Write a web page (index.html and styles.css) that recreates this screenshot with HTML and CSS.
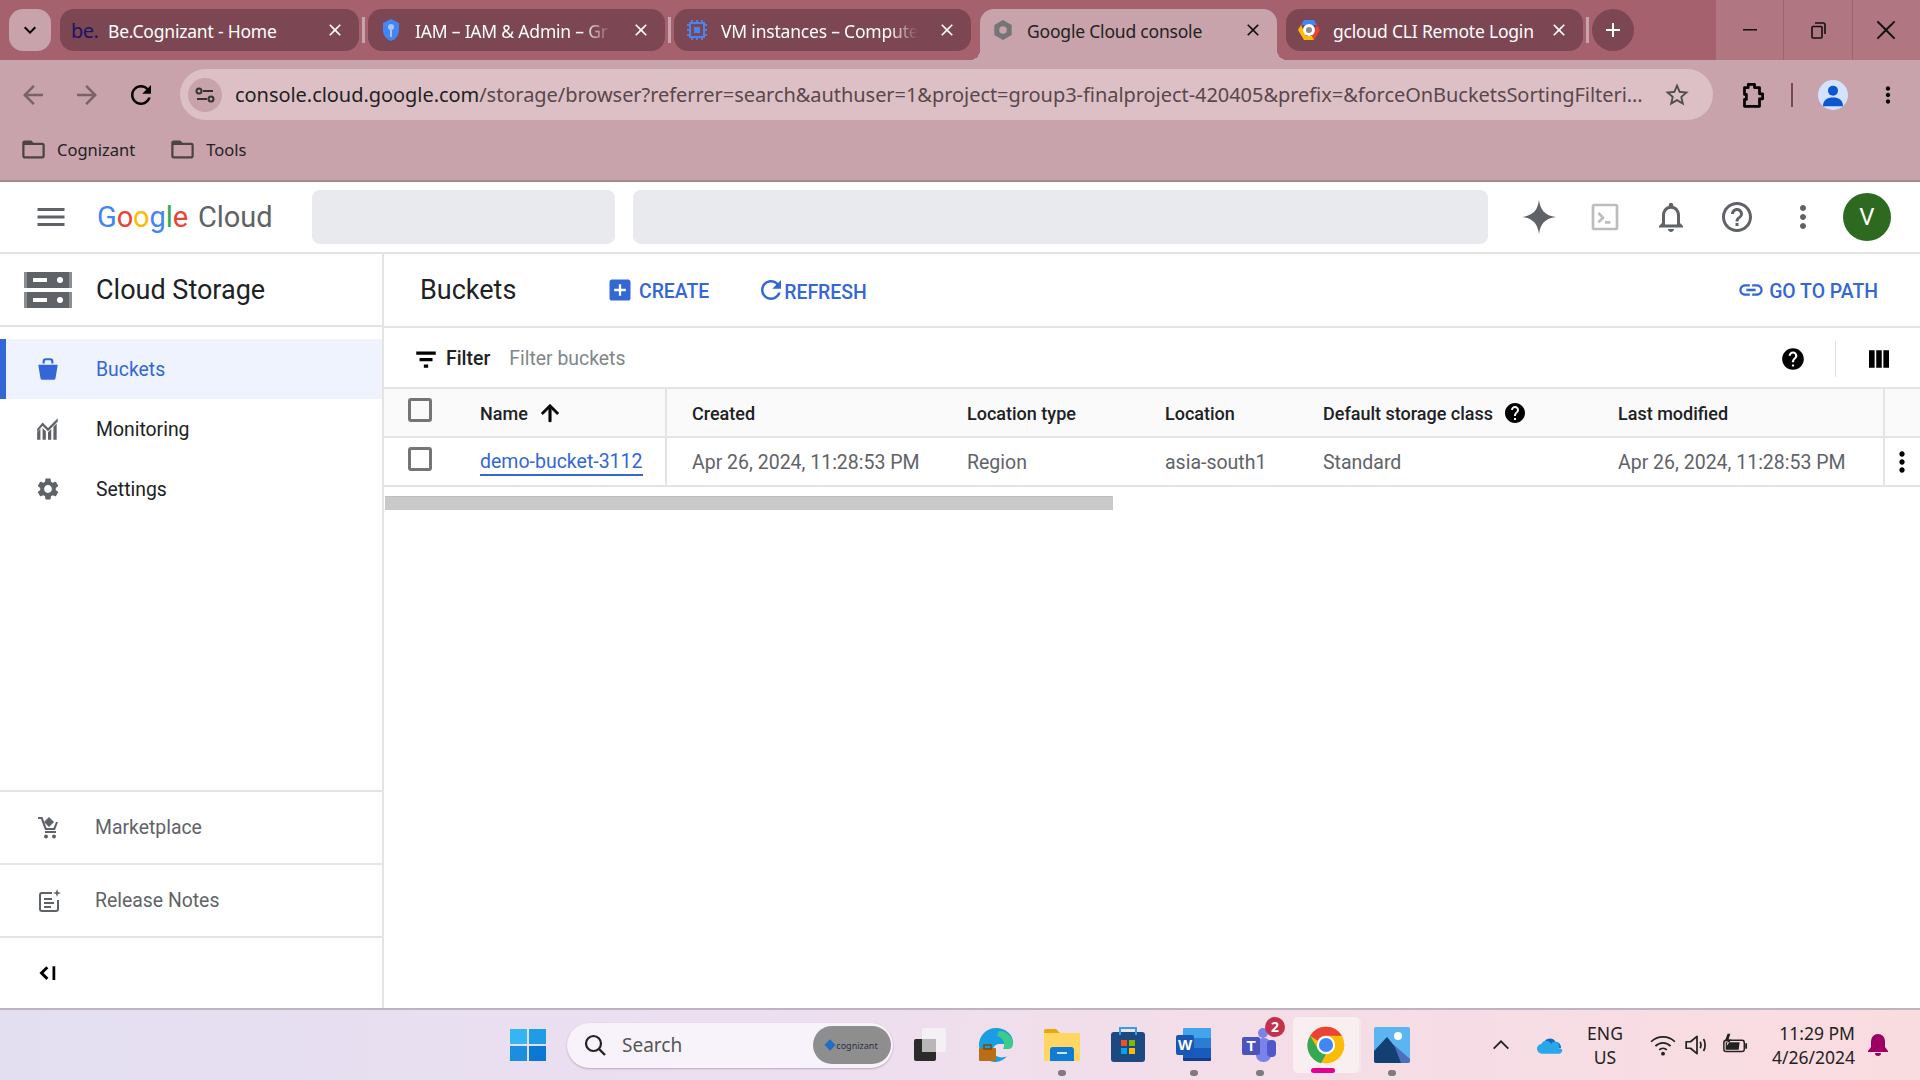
FILE: index.html
```html
<!DOCTYPE html>
<html lang="en">

<head>
    <meta charset="UTF-8">
    <title>Google Cloud console</title>
    <link rel="stylesheet" href="styles.css">
</head>

<body>
    <svg class="sprite" width="0" height="0">
        <symbol id="i-close" viewBox="0 0 24 24"><path d="M19 6.41L17.59 5 12 10.59 6.41 5 5 6.41 10.59 12 5 17.59 6.41 19 12 13.41 17.59 19 19 17.59 13.41 12z"/></symbol>
        <symbol id="i-back" viewBox="0 0 24 24"><path d="M20 11H7.83l5.59-5.59L12 4l-8 8 8 8 1.41-1.41L7.83 13H20v-2z"/></symbol>
        <symbol id="i-forward" viewBox="0 0 24 24"><path d="M12 4l-1.41 1.41L16.17 11H4v2h12.17l-5.58 5.59L12 20l8-8z"/></symbol>
        <symbol id="i-refresh" viewBox="0 0 24 24"><path d="M17.65 6.35C16.2 4.9 14.21 4 12 4c-4.42 0-7.99 3.58-7.99 8s3.57 8 7.99 8c3.73 0 6.84-2.55 7.73-6h-2.08c-.82 2.33-3.04 4-5.65 4-3.31 0-6-2.69-6-6s2.69-6 6-6c1.66 0 3.14.69 4.22 1.78L13 11h7V4l-2.35 2.35z"/></symbol>
        <symbol id="i-folder" viewBox="0 0 24 24"><path d="M20 6h-8l-2-2H4c-1.1 0-1.99.9-1.99 2L2 18c0 1.1.9 2 2 2h16c1.1 0 2-.9 2-2V8c0-1.1-.9-2-2-2zm0 12H4V8h16v10z"/></symbol>
        <symbol id="i-more" viewBox="0 0 24 24"><path d="M12 8c1.1 0 2-.9 2-2s-.9-2-2-2-2 .9-2 2 .9 2 2 2zm0 2c-1.1 0-2 .9-2 2s.9 2 2 2 2-.9 2-2-.9-2-2-2zm0 6c-1.1 0-2 .9-2 2s.9 2 2 2 2-.9 2-2-.9-2-2-2z"/></symbol>
        <symbol id="i-help" viewBox="0 0 24 24"><path d="M12 2C6.48 2 2 6.48 2 12s4.48 10 10 10 10-4.48 10-10S17.52 2 12 2zm1 17h-2v-2h2v2zm2.07-7.75l-.9.92C13.45 12.9 13 13.5 13 15h-2v-.5c0-1.1.45-2.1 1.17-2.83l1.24-1.26c.37-.36.59-.86.59-1.41 0-1.1-.9-2-2-2s-2 .9-2 2H8c0-2.21 1.79-4 4-4s4 1.79 4 4c0 .88-.36 1.68-.93 2.25z"/></symbol>
    </svg>

    <!-- browser tabs -->
    <div class="tabstrip">
        <div class="tab-list"><svg class="icon-sm" viewBox="0 0 24 24"><path d="M7.41 8.59L12 13.17l4.59-4.58L18 10l-6 6-6-6z"/></svg></div>
        <div class="tab">
            <span class="be-logo">be.</span>
            <span class="tab-title">Be.Cognizant - Home</span>
            <svg class="tab-x"><use href="#i-close"/></svg>
        </div>
        <i class="tab-sep"></i>
        <div class="tab">
            <svg class="favicon" viewBox="0 0 24 24"><path fill="#4285f4" d="M12 1l8 4v7c0 5.500-3.400 9.500-8 11-4.600-1.500-8-5.500-8-11V5z"/><circle cx="12" cy="9" r="3" fill="#a9c6f7"/><path fill="#a9c6f7" d="M11 12h2v7h-2z"/></svg>
            <span class="tab-title fade">IAM – IAM &amp; Admin – Gr</span>
            <svg class="tab-x"><use href="#i-close"/></svg>
        </div>
        <i class="tab-sep"></i>
        <div class="tab">
            <svg class="favicon" viewBox="0 0 24 24"><path fill="none" stroke="#5b8def" stroke-width="1.500" d="M2 7h3M2 12h3M2 17h3M19 7h3M19 12h3M19 17h3M7 2v3M12 2v3M17 2v3M7 19v3M12 19v3M17 19v3"/><rect x="5" y="5" width="14" height="14" fill="none" stroke="#4285f4" stroke-width="2"/><rect x="9" y="9" width="6" height="6" fill="#4285f4"/></svg>
            <span class="tab-title fade">VM instances – Compute</span>
            <svg class="tab-x"><use href="#i-close"/></svg>
        </div>
        <div class="tab tab-active">
            <svg class="favicon" viewBox="0 0 24 24"><path fill="#757575" d="M12 2l8.700 5v10L12 22l-8.700-5V7z"/><circle cx="12" cy="12" r="3.800" fill="#c8a3ab"/></svg>
            <span class="tab-title">Google Cloud console</span>
            <svg class="tab-x"><use href="#i-close"/></svg>
        </div>
        <div class="tab">
            <svg class="favicon" viewBox="0 0 24 24"><path fill="#4285f4" d="M7 2h10l3 5H4z"/><path fill="#ea4335" d="M20 7l3 5-6 10-2-4z"/><path fill="#fbbc05" d="M4 7l-3 5 6 10h10l-2-4H9z"/><circle cx="12" cy="12" r="6" fill="#fff"/><circle cx="12" cy="12" r="3" fill="#8a8a8a"/></svg>
            <span class="tab-title">gcloud CLI Remote Login</span>
            <svg class="tab-x"><use href="#i-close"/></svg>
        </div>
        <i class="tab-sep"></i>
        <div class="tab-new"><svg class="icon-sm" viewBox="0 0 24 24"><path d="M19 13h-6v6h-2v-6H5v-2h6V5h2v6h6v2z"/></svg></div>
        <div class="win-controls">
            <div class="win-btn"><svg class="icon-sm" viewBox="0 0 24 24"><path d="M5 11h14v1.500H5z"/></svg></div>
            <div class="win-btn"><svg class="icon-sm" viewBox="0 0 24 24"><path fill="none" stroke="#111" stroke-width="1.600" d="M7 8.500h8a1 1 0 0 1 1 1V19a1 1 0 0 1-1 1H7a1 1 0 0 1-1-1V9.500a1 1 0 0 1 1-1zM9 5h8a2 2 0 0 1 2 2v9"/></svg></div>
            <div class="win-btn"><svg class="icon-x" viewBox="0 0 24 24"><path d="M20 5.200L18.800 4 12 10.800 5.200 4 4 5.200 10.800 12 4 18.800 5.200 20 12 13.200 18.800 20 20 18.800 13.200 12z"/></svg></div>
        </div>
    </div>

    <!-- address bar and bookmarks -->
    <div class="toolbar">
        <div class="nav-row">
            <svg class="nav-icon dim"><use href="#i-back"/></svg>
            <svg class="nav-icon dim"><use href="#i-forward"/></svg>
            <svg class="nav-icon"><use href="#i-refresh"/></svg>
            <div class="omnibox">
                <span class="site-info"><svg viewBox="0 0 24 24" class="icon-sm"><path fill="none" stroke="#333" stroke-width="2" d="M10 8h10M4 16h10"/><circle cx="6" cy="8" r="2.500" fill="none" stroke="#333" stroke-width="2"/><circle cx="18" cy="16" r="2.500" fill="none" stroke="#333" stroke-width="2"/></svg></span>
                <span class="url"><b>console.cloud.google.com</b>/storage/browser?referrer=search&amp;authuser=1&amp;project=group3-finalproject-420405&amp;prefix=&amp;forceOnBucketsSortingFilteri...</span>
                <svg class="star" viewBox="0 0 24 24"><path d="M22 9.240l-7.190-.62L12 2 9.190 8.630 2 9.240l5.460 4.730L5.820 21 12 17.270 18.180 21l-1.630-7.030L22 9.240zM12 15.400l-3.760 2.270 1-4.280-3.320-2.880 4.380-.38L12 6.100l1.710 4.040 4.380.38-3.320 2.880 1 4.280L12 15.400z"/></svg>
            </div>
            <svg class="ext" viewBox="0 0 24 24"><path fill="none" stroke="#000" stroke-width="2.200" stroke-linejoin="round" d="M6 6h3V3.500h5V6h4v5h2.500v4H18v6H6v-5.500h1.500v-4H6z"/></svg>
            <i class="bar-sep"></i>
            <span class="profile"><svg viewBox="0 0 24 24"><circle cx="12" cy="8.500" r="4" fill="#0b57d0"/><path fill="#0b57d0" d="M4 21c0-5 3.500-7 8-7s8 2 8 7z"/></svg></span>
            <svg class="bar-more"><use href="#i-more"/></svg>
        </div>
        <div class="bookmarks">
            <span class="bookmark"><svg><use href="#i-folder"/></svg>Cognizant</span>
            <span class="bookmark"><svg><use href="#i-folder"/></svg>Tools</span>
        </div>
    </div>

    <!-- console header -->
    <header class="gc-header">
        <svg class="menu-icon" viewBox="0 0 24 24"><path d="M3 18h18v-2H3v2zm0-5h18v-2H3v2zm0-7v2h18V6H3z"/></svg>
        <div class="gc-logo"><span class="c-b">G</span><span class="c-r">o</span><span class="c-y">o</span><span class="c-b">g</span><span class="c-g">l</span><span class="c-r">e</span> <span class="gc-cloud">Cloud</span></div>
        <div class="skeleton skeleton-project"></div>
        <div class="skeleton skeleton-search"></div>
        <div class="gc-actions">
            <svg class="spark" viewBox="0 0 24 24"><path fill="#5f6368" d="M12 0c1 7 4 11 12 12-8 1-11 5-12 12-1-7-4-11-12-12 8-1 11-5 12-12z"/></svg>
            <svg class="act-term" viewBox="0 0 24 24"><rect x="3" y="3" width="18" height="18" rx="1" fill="none" stroke="#bdbdbd" stroke-width="2"/><path fill="none" stroke="#bdbdbd" stroke-width="2" d="M7 9l3.500 3.500L7 16M12 16h4"/></svg>
            <svg class="act-big" viewBox="0 0 24 24"><path fill="#5f6368" d="M12 22c1.100 0 2-.9 2-2h-4c0 1.100.9 2 2 2zm6-6v-5c0-3.070-1.630-5.640-4.500-6.320V4c0-.83-.67-1.500-1.500-1.500s-1.500.67-1.500 1.500v.68C7.640 5.360 6 7.920 6 11v5l-2 2v1h16v-1l-2-2zm-2 1H8v-6c0-2.480 1.510-4.500 4-4.500s4 2.020 4 4.500v6z"/></svg>
            <svg class="act-big" viewBox="0 0 24 24"><path fill="#5f6368" d="M11 18h2v-2h-2v2zm1-16C6.480 2 2 6.480 2 12s4.480 10 10 10 10-4.480 10-10S17.520 2 12 2zm0 18c-4.410 0-8-3.590-8-8s3.590-8 8-8 8 3.590 8 8-3.590 8-8 8zm0-14c-2.210 0-4 1.790-4 4h2c0-1.100.9-2 2-2s2 .9 2 2c0 2-3 1.750-3 5h2c0-2.250 3-2.500 3-5 0-2.210-1.790-4-4-4z"/></svg>
            <svg class="act-big gray-fill"><use href="#i-more"/></svg>
        </div>
        <div class="avatar">V</div>
    </header>

    <div class="console">
        <!-- left nav -->
        <aside class="sidebar">
            <div class="product">
                <svg class="product-icon" viewBox="0 0 48 36"><path fill="#5f6368" d="M0 0h48v16H0zM0 20h48v16H0z"/><path fill="#fff" d="M9 6h14v4H9zM9 26h14v4H9z"/><circle cx="36" cy="8" r="3" fill="#fff"/><circle cx="36" cy="28" r="3" fill="#fff"/><path fill="#8a8d91" d="M0 0h3v16H0zM45 0h3v16h-3zM0 20h3v16H0zM45 20h3v16h-3z"/></svg>
                <span>Cloud Storage</span>
            </div>
            <nav class="nav">
                <a class="nav-item active">
                    <svg viewBox="0 0 24 24"><path d="M3 8h18l-2 12a2 2 0 0 1-2 2H7a2 2 0 0 1-2-2zM7 7V5a3 3 0 0 1 3-3h4a3 3 0 0 1 3 3v2h-2V5a1 1 0 0 0-1-1h-4a1 1 0 0 0-1 1v2z"/></svg>
                    Buckets
                </a>
                <a class="nav-item">
                    <svg viewBox="0 0 24 24"><path d="M2 22v-7l3-3v10zM7 22v-11l3 3v8zM12 22v-7l3-3v10zM17 22V10l3-3v15z"/><path d="M2 12l5-6 5 5 9-9v3l-9 9-5-5-5 6z"/></svg>
                    Monitoring
                </a>
                <a class="nav-item">
                    <svg viewBox="0 0 24 24"><path d="M19.140 12.940c.04-.3.06-.61.06-.94 0-.32-.02-.64-.07-.94l2.030-1.580c.18-.14.23-.41.12-.61l-1.920-3.320c-.12-.22-.37-.29-.59-.22l-2.390.96c-.5-.38-1.030-.7-1.620-.94l-.36-2.540c-.04-.24-.24-.41-.48-.41h-3.840c-.24 0-.43.17-.47.41l-.36 2.540c-.59.24-1.130.57-1.620.94l-2.390-.96c-.22-.08-.47 0-.59.22L2.740 8.870c-.12.21-.08.47.12.61l2.030 1.580c-.05.3-.09.63-.09.94s.02.64.07.94l-2.030 1.580c-.18.14-.23.41-.12.61l1.920 3.320c.12.22.37.29.59.22l2.390-.96c.5.38 1.030.7 1.620.94l.36 2.540c.05.24.24.41.48.41h3.840c.24 0 .44-.17.47-.41l.36-2.540c.59-.24 1.130-.56 1.620-.94l2.390.96c.22.08.47 0 .59-.22l1.920-3.320c.12-.22.07-.47-.12-.61l-2.010-1.580zM12 15.600c-1.980 0-3.600-1.620-3.600-3.600s1.620-3.600 3.600-3.600 3.600 1.620 3.600 3.600-1.620 3.600-3.600 3.600z"/></svg>
                    Settings
                </a>
            </nav>
            <div class="side-bottom">
                <a class="side-link">
                    <svg viewBox="0 0 24 24"><path d="M12 1l5 5-5 5-5-5z"/><path d="M1 3h3l1 3 3 8h10l3-8h-2l-2.500 6H9.500L6 2.500 5.500 1H1zM8 17h11v-2H8z"/><circle cx="9" cy="20.500" r="2"/><circle cx="17" cy="20.500" r="2"/></svg>
                    Marketplace
                </a>
                <a class="side-link">
                    <svg viewBox="0 0 24 24"><path fill="none" stroke="#5f6368" stroke-width="2" d="M15 4H5a2 2 0 0 0-2 2v14a2 2 0 0 0 2 2h14a2 2 0 0 0 2-2v-9"/><path d="M7 9h8v2H7zM7 13h10v2H7zM7 17h7v2H7zM20 0l1 3 3 1-3 1-1 3-1-3-3-1 3-1z"/></svg>
                    Release Notes
                </a>
                <div class="side-collapse">
                    <svg viewBox="0 0 16 16"><path d="M7.500 3L9 4.500 5.500 8 9 11.500 7.500 13 2.500 8zM12 3h2v10h-2z"/></svg>
                </div>
            </div>
        </aside>

        <!-- buckets page -->
        <main class="page">
            <div class="page-head">
                <h1>Buckets</h1>
                <a class="action action-create"><svg viewBox="0 0 24 24"><path d="M19 3H5c-1.100 0-2 .9-2 2v14c0 1.100.9 2 2 2h14c1.100 0 2-.9 2-2V5c0-1.100-.9-2-2-2zm-2 10h-4v4h-2v-4H7v-2h4V7h2v4h4v2z"/></svg>CREATE</a>
                <a class="action action-refresh"><svg><use href="#i-refresh"/></svg>REFRESH</a>
                <a class="action action-path"><svg viewBox="0 0 24 24"><path d="M3.900 12c0-1.710 1.390-3.100 3.100-3.100h4V7H7c-2.760 0-5 2.240-5 5s2.240 5 5 5h4v-1.900H7c-1.710 0-3.100-1.390-3.100-3.100zM8 13h8v-2H8v2zm9-6h-4v1.900h4c1.710 0 3.100 1.390 3.100 3.100s-1.390 3.100-3.100 3.100h-4V17h4c2.760 0 5-2.240 5-5s-2.240-5-5-5z"/></svg>GO TO PATH</a>
            </div>
            <div class="filter-bar">
                <svg class="filter-icon" viewBox="0 0 24 24"><path d="M3 5h18v3H3zM6 11h12v3H6zM10 17h4v3h-4z"/></svg>
                <span class="filter-label">Filter</span>
                <span class="filter-hint">Filter buckets</span>
                <svg class="filter-help"><use href="#i-help"/></svg>
                <i class="filter-sep"></i>
                <svg class="filter-cols" viewBox="0 0 24 24"><path d="M4 5h4.500v14H4zM9.800 5h4.400v14H9.800zM15.500 5H20v14h-4.500z"/></svg>
            </div>
            <div class="table">
                <div class="row head">
                    <div class="cell cell-name"><i class="check"></i>Name<svg class="sort" viewBox="0 0 24 24"><path d="M4 12l1.410 1.410L11 7.830V20h2V7.830l5.580 5.590L20 12l-8-8-8 8z" stroke="#000" stroke-width=".8"/></svg></div>
                    <div class="cell">Created</div>
                    <div class="cell">Location type</div>
                    <div class="cell">Location</div>
                    <div class="cell">Default storage class<svg class="head-help"><use href="#i-help"/></svg></div>
                    <div class="cell">Last modified</div>
                    <div class="cell cell-act"></div>
                </div>
                <div class="row">
                    <div class="cell cell-name"><i class="check"></i><a class="bucket-link">demo-bucket-3112</a></div>
                    <div class="cell">Apr 26, 2024, 11:28:53 PM</div>
                    <div class="cell">Region</div>
                    <div class="cell">asia-south1</div>
                    <div class="cell">Standard</div>
                    <div class="cell">Apr 26, 2024, 11:28:53 PM</div>
                    <div class="cell cell-act"><svg class="row-more"><use href="#i-more"/></svg></div>
                </div>
            </div>
            <div class="hscroll"><div class="hscroll-thumb"></div></div>
        </main>
    </div>

    <!-- windows taskbar -->
    <footer class="taskbar">
        <div class="task-slot task-start">
            <svg viewBox="0 0 36 36"><path fill="#35b5f2" d="M0 2h17v15H0z"/><path fill="#1e9de6" d="M19 2h17v15H19z"/><path fill="#1a8fe0" d="M0 19h17v15H0z"/><path fill="#0a78d4" d="M19 19h17v15H19z"/></svg>
        </div>
        <div class="task-search">
            <svg viewBox="0 0 24 24"><circle cx="10.500" cy="10.500" r="7.500" fill="none" stroke="#222" stroke-width="2.200"/><path stroke="#222" stroke-width="2.400" d="M16 16l6 6"/></svg>
            <span>Search</span>
            <span class="search-badge"><span class="badge-dot"></span>cognizant</span>
        </div>
        <div class="task-slot">
            <svg viewBox="0 0 36 36"><rect x="2" y="12" width="22" height="22" rx="2" fill="#2b2b2b"/><rect x="10" y="1" width="24" height="24" rx="2" fill="#f3f1f3"/><rect x="10" y="12" width="14" height="13" fill="#b8b6b9"/></svg>
        </div>
        <div class="task-slot">
            <svg viewBox="0 0 36 36"><path fill="#1b9de2" d="M18 1C8 1 1 9 1 18c0 9 6 16 15 17 5 0 10-2 13-6-5 3-12 1-14-4-1-4 2-8 6-8h14c1-9-7-16-17-16z"/><path fill="#3ccb8b" d="M21 4c8 0 14 6 14 13 0 3-2 5-5 5h-5c3-5 0-12-6-13z"/><rect x="1" y="21" width="17" height="13" rx="1" fill="#b86e14"/><rect x="6" y="18" width="7" height="4" fill="none" stroke="#7d4a0d" stroke-width="1.500"/></svg>
        </div>
        <div class="task-slot has-dot">
            <svg viewBox="0 0 36 36"><path fill="#e8a80f" d="M0 4a2 2 0 0 1 2-2h10l4 4h-16z"/><path fill="#fdd663" d="M0 6h36v28H0z"/><path fill="#0f7bd4" d="M6 23a3 3 0 0 1 3-3h18a3 3 0 0 1 3 3v11H6z"/><rect x="13" y="25" width="10" height="2" fill="#cfe7fb"/></svg>
        </div>
        <div class="task-slot">
            <svg viewBox="0 0 36 36"><rect x="1" y="5" width="34" height="30" rx="3" fill="#1c4a80"/><path fill="none" stroke="#2ea4e6" stroke-width="2" d="M10 8V1h16v7"/><path fill="#f25022" d="M11 13h6v6h-6z"/><path fill="#7fba00" d="M19 13h6v6h-6z"/><path fill="#00a4ef" d="M11 21h6v6h-6z"/><path fill="#ffb900" d="M19 21h6v6h-6z"/></svg>
        </div>
        <div class="task-slot has-dot">
            <svg viewBox="0 0 36 36"><path fill="#41a5ee" d="M8 1h26a1 1 0 0 1 1 1v9H7V2a1 1 0 0 1 1-1z"/><path fill="#2b7cd3" d="M7 11h28v10H7z"/><path fill="#185abd" d="M7 21h28v10H7z"/><path fill="#103f91" d="M7 31h28v2a1 1 0 0 1-1 1H8a1 1 0 0 1-1-1z"/><rect y="8" width="18" height="20" rx="2" fill="#1a56b5"/><text x="9" y="23" class="tile-letter">W</text></svg>
        </div>
        <div class="task-slot has-dot task-teams">
            <svg viewBox="0 0 36 36"><circle cx="21" cy="6" r="5" fill="#7b83eb"/><rect x="14" y="11" width="15" height="24" rx="7" fill="#7b83eb"/><rect x="25" y="13" width="9" height="17" rx="4" fill="#5059c9"/><rect y="10" width="18" height="18" rx="2" fill="#4b53bc"/><text x="9" y="24" class="tile-letter">T</text></svg>
            <span class="teams-badge">2</span>
        </div>
        <div class="task-slot task-chrome">
            <svg viewBox="0 0 48 48"><circle cx="24" cy="24" r="22" fill="#fbbc05"/><path fill="#ea4335" d="M24 2a22 22 0 0 1 19 11H24a11 11 0 0 0-10 6L5 13A22 22 0 0 1 24 2z"/><path fill="#34a853" d="M5 13l10 17a11 11 0 0 0 9 5l-6 11A22 22 0 0 1 5 13z"/><circle cx="24" cy="24" r="11" fill="#fff"/><circle cx="24" cy="24" r="8.500" fill="#4285f4"/></svg>
            <i class="chrome-mark"></i>
        </div>
        <div class="task-slot has-dot">
            <svg viewBox="0 0 36 36"><rect width="36" height="36" rx="2" fill="#5bb5f0"/><circle cx="24" cy="9" r="4" fill="#fff"/><path fill="#143f72" d="M0 34V24L13 10l14 17v9H2a2 2 0 0 1-2-2z"/><path fill="#4c6fc0" d="M20 18l16 14v2a2 2 0 0 1-2 2h-7z"/></svg>
        </div>

        <div class="tray">
            <svg class="tray-chevron" viewBox="0 0 24 24"><path fill="none" stroke="#222" stroke-width="2" d="M4 16l8-8 8 8"/></svg>
            <svg class="tray-cloud" viewBox="0 0 24 16"><path fill="#0f6cbd" d="M6 7a6 6 0 0 1 11-2 5 5 0 0 1 5 6H6z"/><path fill="#28a8ea" d="M5 16a4.500 4.500 0 0 1-1-9 5 5 0 0 1 9 0 4 4 0 0 1 7 4l3 1a3 3 0 0 1-2 4z"/></svg>
            <div class="tray-lang">ENG<br>US</div>
            <svg class="tray-wifi" viewBox="0 0 24 24"><path fill="none" stroke="#222" stroke-width="1.600" d="M1 9c6-6 16-6 22 0M5 13c4-4 10-4 14 0M8.500 16.500c2-2 5-2 7 0"/><circle cx="12" cy="20" r="1.800" fill="#222"/></svg>
            <svg class="tray-sound" viewBox="0 0 24 24"><path fill="none" stroke="#222" stroke-width="1.600" stroke-linejoin="round" d="M2 9h4l6-5v16l-6-5H2zM15 9c1 2 1 4 0 6M18 6.500c2 3 2 8 0 11"/></svg>
            <svg class="tray-battery" viewBox="0 0 28 24"><rect x="2" y="7" width="22" height="12" rx="2.500" fill="none" stroke="#222" stroke-width="1.600"/><path fill="#222" d="M4 9h15l-1 8H4zM25 10h2v6h-2zM6 0L3 8h3l-1 5 5-7H7l2-6z"/></svg>
            <div class="tray-clock">11:29 PM<br>4/26/2024</div>
            <svg class="tray-bell" viewBox="0 0 24 24"><path fill="#9c0062" d="M12 1a7 7 0 0 1 7 7v6l3 4v1H2v-1l3-4V8a7 7 0 0 1 7-7zM9 20h6a3 3 0 0 1-6 0z"/></svg>
        </div>
    </footer>
</body>

</html>
```

FILE: styles.css
```css
* {
    box-sizing: border-box;
}

html,
body {
    margin: 0;
    height: 100%;
}

body {
    width: 1920px;
    height: 1080px;
    overflow: hidden;
    display: flex;
    flex-direction: column;
    font-family: Roboto, "Liberation Sans", sans-serif;
    background: #fff;
}

.sprite {
    display: block;
    height: 0;
}

.icon-sm {
    width: 24px;
    height: 24px;
}

.icon-x {
    width: 28px;
    height: 28px;
}

/*tabs*/

.tabstrip {
    height: 60px;
    flex: none;
    display: flex;
    align-items: flex-start;
    padding-top: 9px;
    padding-left: 9px;
    background: #a6616f;
}

.tab-list {
    width: 42px;
    height: 42px;
    margin-right: 9px;
    border-radius: 14px;
    background: #c8a3ab;
    display: flex;
    align-items: center;
    justify-content: center;
}

.tab {
    width: 297px;
    height: 42px;
    padding: 0 14px 0 11px;
    border-radius: 14px;
    background: #7c4753;
    color: #fff;
    display: flex;
    align-items: center;
    font-family: "Noto Sans", sans-serif;
    font-size: 17.500px;
}

.tab-list + .tab {
    width: 299px;
}

.tab-sep {
    width: 3px;
    height: 26px;
    margin: 8px 3px 0;
    background: #c8a3ab;
}

.tab-active {
    position: relative;
    height: 51px;
    margin: 0 9px;
    padding-bottom: 9px;
    border-radius: 14px 14px 0 0;
    background: #c8a3ab;
    color: #222;
}

.tab-active::before,
.tab-active::after {
    content: "";
    position: absolute;
    bottom: 0;
    width: 10px;
    height: 10px;
}

.tab-active::before {
    left: -10px;
    background: radial-gradient(circle at 0 0, transparent 10px, #c8a3ab 10px);
}

.tab-active::after {
    right: -10px;
    background: radial-gradient(circle at 100% 0, transparent 10px, #c8a3ab 10px);
}

.tab-title {
    flex: 1;
    min-width: 0;
    white-space: nowrap;
    overflow: hidden;
    letter-spacing: -0.2px;
    padding-top: 1px;
}

.fade {
    margin-right: 19px;
    -webkit-mask-image: linear-gradient(to right, #000 85%, transparent 100%);
    mask-image: linear-gradient(to right, #000 85%, transparent 100%);
}

.tab .favicon {
    width: 24px;
    height: 24px;
    margin-right: 12px;
    flex: none;
}

.be-logo {
    width: 37px;
    flex: none;
    color: #1a1464;
    font-size: 20px;
    letter-spacing: -0.5px;
}

.tab-x {
    width: 20px;
    height: 20px;
    flex: none;
    fill: #fff;
}

.tab-active .tab-x {
    fill: #111;
}

.tab-new {
    width: 42px;
    height: 42px;
    border-radius: 50%;
    background: #7c4753;
    display: flex;
    align-items: center;
    justify-content: center;
    fill: #fff;
}

.win-controls {
    margin-left: auto;
    margin-top: -9px;
    width: 205px;
    height: 60px;
    display: flex;
    background: #b07682;
}

.win-btn {
    flex: 1;
    display: flex;
    align-items: center;
    justify-content: center;
    border-left: 1px solid #a6616f;
    fill: #111;
}

/*address bar*/

.toolbar {
    height: 122px;
    flex: none;
    background: #c8a3ab;
    border-bottom: 2px solid #a5868c;
}

.nav-row {
    height: 60px;
    padding: 9px 0 0 18px;
    display: flex;
    align-items: center;
}

.nav-icon {
    width: 30px;
    height: 30px;
    flex: none;
    margin-right: 24px;
}

.nav-icon.dim {
    fill: #7a6267;
}

.omnibox {
    width: 1533px;
    height: 51px;
    padding: 0 22px 0 8px;
    border-radius: 26px;
    background: #dcc0c5;
    display: flex;
    align-items: center;
    flex: none;
}

.site-info {
    width: 34px;
    height: 34px;
    border-radius: 50%;
    background: #c8a3ab;
    display: flex;
    align-items: center;
    justify-content: center;
    margin-right: 13px;
    flex: none;
}

.url {
    flex: 1;
    white-space: nowrap;
    overflow: hidden;
    font-family: "Noto Sans", sans-serif;
    font-size: 20px;
    color: #59474b;
    letter-spacing: -0.05px;
}

.url b {
    font-weight: 400;
    color: #1f1f1f;
}

.star {
    width: 28px;
    height: 28px;
    fill: #4e4e4e;
    flex: none;
    margin-left: 6px;
}

.ext {
    width: 30px;
    height: 30px;
    flex: none;
    margin-left: 24px;
}

.bar-sep {
    width: 2px;
    height: 24px;
    background: #7c4753;
    margin: 0 25px 0 24px;
}

.profile {
    width: 30px;
    height: 30px;
    border-radius: 50%;
    background: #d3e3fd;
    flex: none;
    display: block;
}

.bar-more {
    width: 26px;
    height: 26px;
    margin-left: 27px;
    flex: none;
}

.bookmarks {
    height: 60px;
    padding: 0 0 2px 20px;
    display: flex;
    align-items: center;
    gap: 34px;
    font-family: "Noto Sans", sans-serif;
    font-size: 16.500px;
    color: #222;
}

.bookmark {
    display: flex;
    align-items: center;
    gap: 10px;
}

.bookmark svg {
    width: 27px;
    height: 27px;
    fill: #4b4446;
}

/*console header*/

.gc-header {
    height: 72px;
    flex: none;
    display: flex;
    align-items: center;
    border-bottom: 2px solid #e4e4e4;
    padding-left: 33px;
}

.menu-icon {
    width: 36px;
    height: 36px;
    fill: #5f6368;
    flex: none;
}

.gc-logo {
    width: 215px;
    margin-left: 28px;
    font-size: 29px;
    letter-spacing: -0.100px;
    color: #5f6368;
    white-space: nowrap;
}

.c-b { color: #4285f4; }
.c-r { color: #ea4335; }
.c-y { color: #fbbc05; }
.c-g { color: #34a853; }

.gc-cloud {
    margin-left: 3px;
}

.skeleton {
    height: 54px;
    border-radius: 8px;
    background: #e8eaed;
    flex: none;
}

.skeleton-project {
    width: 303px;
    margin-right: 18px;
}

.skeleton-search {
    width: 855px;
}

.gc-actions {
    margin-left: 36px;
    display: flex;
    align-items: center;
    gap: 36px;
}

.gc-actions svg {
    width: 30px;
    height: 30px;
    flex: none;
}

.gc-actions .spark {
    width: 34px;
    height: 34px;
    margin: 0 -2px;
}

.gc-actions .act-term {
    width: 32px;
    height: 32px;
    margin: 0 -1px;
}

.gc-actions .act-big {
    width: 36px;
    height: 36px;
    margin: 0 -3px;
}

.gc-actions .gray-fill {
    fill: #5f6368;
}

.avatar {
    width: 48px;
    height: 48px;
    margin-left: 25px;
    border-radius: 50%;
    background: #2d6a1f;
    color: #fff;
    font-size: 24px;
    display: flex;
    align-items: center;
    justify-content: center;
    flex: none;
}

/*console body*/

.console {
    flex: 1;
    min-height: 0;
    display: flex;
}

.sidebar {
    width: 384px;
    flex: none;
    border-right: 2px solid #e4e4e4;
    display: flex;
    flex-direction: column;
}

.product {
    height: 73px;
    flex: none;
    padding-left: 24px;
    display: flex;
    align-items: center;
    gap: 24px;
    border-bottom: 2px solid #e4e4e4;
    font-size: 27px;
    color: #202124;
}

.product-icon {
    width: 48px;
    height: 36px;
}

.nav {
    padding-top: 12px;
}

.nav-item {
    height: 60px;
    padding-left: 35px;
    display: flex;
    align-items: center;
    gap: 35px;
    font-size: 19.400px;
    color: #202124;
}

.nav-item svg {
    width: 26px;
    height: 26px;
    fill: #5f6368;
}

.nav-item.active {
    background: #eef3fd;
    border-left: 6px solid #3367d6;
    padding-left: 29px;
    color: #3367d6;
}

.nav-item.active svg {
    fill: #3367d6;
}

.side-bottom {
    margin-top: auto;
}

.side-link {
    height: 73px;
    padding-left: 37px;
    display: flex;
    align-items: center;
    gap: 34px;
    font-size: 19.400px;
    color: #5f6368;
    border-top: 2px solid #e4e4e4;
}

.side-link svg {
    width: 24px;
    height: 24px;
    fill: #5f6368;
}

.side-collapse {
    height: 72px;
    padding-left: 36px;
    display: flex;
    align-items: center;
    border-top: 2px solid #e4e4e4;
}

.side-collapse svg {
    width: 22px;
    height: 22px;
}

.page {
    flex: 1;
    min-width: 0;
    display: flex;
    flex-direction: column;
}

.page-head {
    height: 74px;
    flex: none;
    padding: 0 42px 0 36px;
    display: flex;
    align-items: center;
    border-bottom: 2px solid #e4e4e4;
}

.page-head h1 {
    width: 186px;
    margin: 0;
    font-size: 27px;
    font-weight: 400;
    color: #202124;
}

.action {
    display: flex;
    align-items: center;
    padding-top: 2px;
    font-size: 19.400px;
    font-weight: 500;
    color: #3367d6;
    white-space: nowrap;
}

.action svg {
    width: 28px;
    height: 28px;
    fill: #3367d6;
    flex: none;
}

.action-create svg {
    margin: -2px 5px 0 0;
}

.action-refresh {
    margin-left: 47px;
    padding-top: 4px;
}

.action-refresh svg {
    width: 30px;
    height: 30px;
    margin: -4px -2px 0 0;
}

.action-path {
    margin-left: auto;
}

.action-path svg {
    margin: -2px 4px 0 0;
}

.filter-bar {
    height: 61px;
    flex: none;
    padding: 2px 26px 0 29px;
    display: flex;
    align-items: center;
    font-size: 19.400px;
    border-bottom: 2px solid #e4e4e4;
}

.filter-icon {
    width: 26px;
    height: 26px;
    flex: none;
    margin-right: 7px;
}

.filter-label {
    font-weight: 500;
    color: #202124;
    margin-right: 19px;
}

.filter-hint {
    color: #80868b;
}

.filter-help {
    width: 26px;
    height: 26px;
    margin-left: auto;
    flex: none;
}

.filter-sep {
    width: 1px;
    height: 36px;
    background: #e0e0e0;
    margin: 0 28px 0 29px;
}

.filter-cols {
    width: 30px;
    height: 30px;
    flex: none;
}

/*table*/

.row {
    display: grid;
    grid-template-columns: 283px 276px 198px 158px 295px 289px 37px;
    height: 49px;
    border-bottom: 2px solid #e4e4e4;
}

.head {
    background: #fafafa;
}

.cell {
    display: flex;
    align-items: center;
    padding: 2px 0 0 24px;
    font-size: 19.500px;
    color: #5f6368;
    white-space: nowrap;
}

.cell-name + .cell {
    padding-left: 25px;
}

.head .cell {
    padding-top: 1px;
    color: #202124;
    font-size: 18px;
    font-weight: 500;
}

.cell-name {
    border-right: 2px solid #e4e4e4;
}

.cell-act {
    padding-left: 0;
    border-left: 2px solid #e4e4e4;
}

.check {
    width: 24px;
    height: 24px;
    margin: -7px 48px 0 0;
    border: 3px solid #757575;
    border-radius: 3px;
    background: #fff;
    flex: none;
}

.head .check {
    margin-top: -6px;
    background: transparent;
}

.sort {
    width: 26px;
    height: 26px;
    margin-left: 9px;
    flex: none;
}

.head-help {
    width: 24px;
    height: 24px;
    margin-left: 10px;
    flex: none;
}

.bucket-link {
    color: #3367d6;
    border-bottom: 2px solid #3367d6;
    line-height: 25px;
}

.row-more {
    width: 32px;
    height: 32px;
    margin: -2px 0 0 1px;
}

.hscroll {
    padding: 9px 0 0 1px;
}

.hscroll-thumb {
    width: 728px;
    height: 14px;
    background: #c9c9c9;
    border-top: 1px solid #bdbdbd;
}

/*taskbar*/

.taskbar {
    height: 72px;
    flex: none;
    display: flex;
    align-items: center;
    padding-left: 495px;
    border-top: 2px solid #bdb4bf;
    background: linear-gradient(to right, #e3dff1 0%, #ecdff0 40%, #f5dde6 70%, #f9dce0 100%);
}

.task-slot {
    width: 66px;
    height: 56px;
    flex: none;
    position: relative;
    display: flex;
    align-items: center;
    justify-content: center;
}

.task-slot svg {
    width: 36px;
    height: 36px;
}

.task-start {
    width: 66px;
    margin-right: 6px;
}

.has-dot::after {
    content: "";
    position: absolute;
    left: 50%;
    bottom: -3px;
    width: 8px;
    height: 6px;
    margin-left: -4px;
    border-radius: 3px;
    background: #7e7a80;
}

.tile-letter {
    font: 700 15px "Liberation Sans", sans-serif;
    fill: #fff;
    text-anchor: middle;
}

.teams-badge {
    position: absolute;
    top: 0;
    right: 8px;
    width: 20px;
    height: 20px;
    border-radius: 50%;
    background: #c4314b;
    color: #fff;
    font: 700 14px/20px "Noto Sans", sans-serif;
    text-align: center;
}

.task-chrome {
    background: #f9eff1;
    border-radius: 5px;
    box-shadow: 2px 0 0 #f4e6ea;
}

.task-chrome svg {
    width: 40px;
    height: 40px;
}

.chrome-mark {
    position: absolute;
    left: 18px;
    bottom: 0;
    width: 24px;
    height: 5px;
    border-radius: 3px;
    background: #e3008c;
}

.task-search {
    width: 326px;
    height: 45px;
    margin-right: 4px;
    flex: none;
    padding: 0 2px 0 16px;
    border-radius: 23px;
    background: #f8f3fa;
    box-shadow: 0 1px 2px #b5abb9;
    display: flex;
    align-items: center;
    font-family: "Noto Sans", sans-serif;
    font-size: 19px;
    color: #555;
}

.task-search > svg {
    width: 24px;
    height: 24px;
    margin-right: 15px;
    flex: none;
}

.search-badge {
    width: 78px;
    height: 38px;
    margin-left: auto;
    border-radius: 19px;
    background: #8e8e8e;
    color: #2b2f45;
    font-size: 9px;
    display: flex;
    align-items: center;
    justify-content: center;
    gap: 2px;
}

.badge-dot {
    width: 8px;
    height: 8px;
    background: #1f6fc4;
    transform: rotate(45deg);
}

.tray {
    margin-left: auto;
    width: 430px;
    display: flex;
    align-items: center;
    flex: none;
    font-family: "Noto Sans", sans-serif;
    font-size: 17.500px;
    line-height: 24px;
    color: #222;
}

.tray-chevron {
    width: 22px;
    height: 22px;
    flex: none;
}

.tray-cloud {
    width: 26px;
    height: 18px;
    margin-left: 25px;
    flex: none;
}

.tray-lang {
    width: 50px;
    margin-left: 17px;
    text-align: center;
    flex: none;
}

.tray-wifi {
    width: 26px;
    height: 26px;
    margin-left: 20px;
    flex: none;
}

.tray-sound {
    width: 26px;
    height: 26px;
    margin-left: 8px;
    flex: none;
}

.tray-battery {
    width: 26px;
    height: 24px;
    margin-left: 12px;
    flex: none;
}

.tray-clock {
    width: 100px;
    margin-left: 7px;
    text-align: right;
    flex: none;
    font-size: 17.500px;
}

.tray-bell {
    width: 24px;
    height: 24px;
    margin-left: 11px;
    flex: none;
}
```
